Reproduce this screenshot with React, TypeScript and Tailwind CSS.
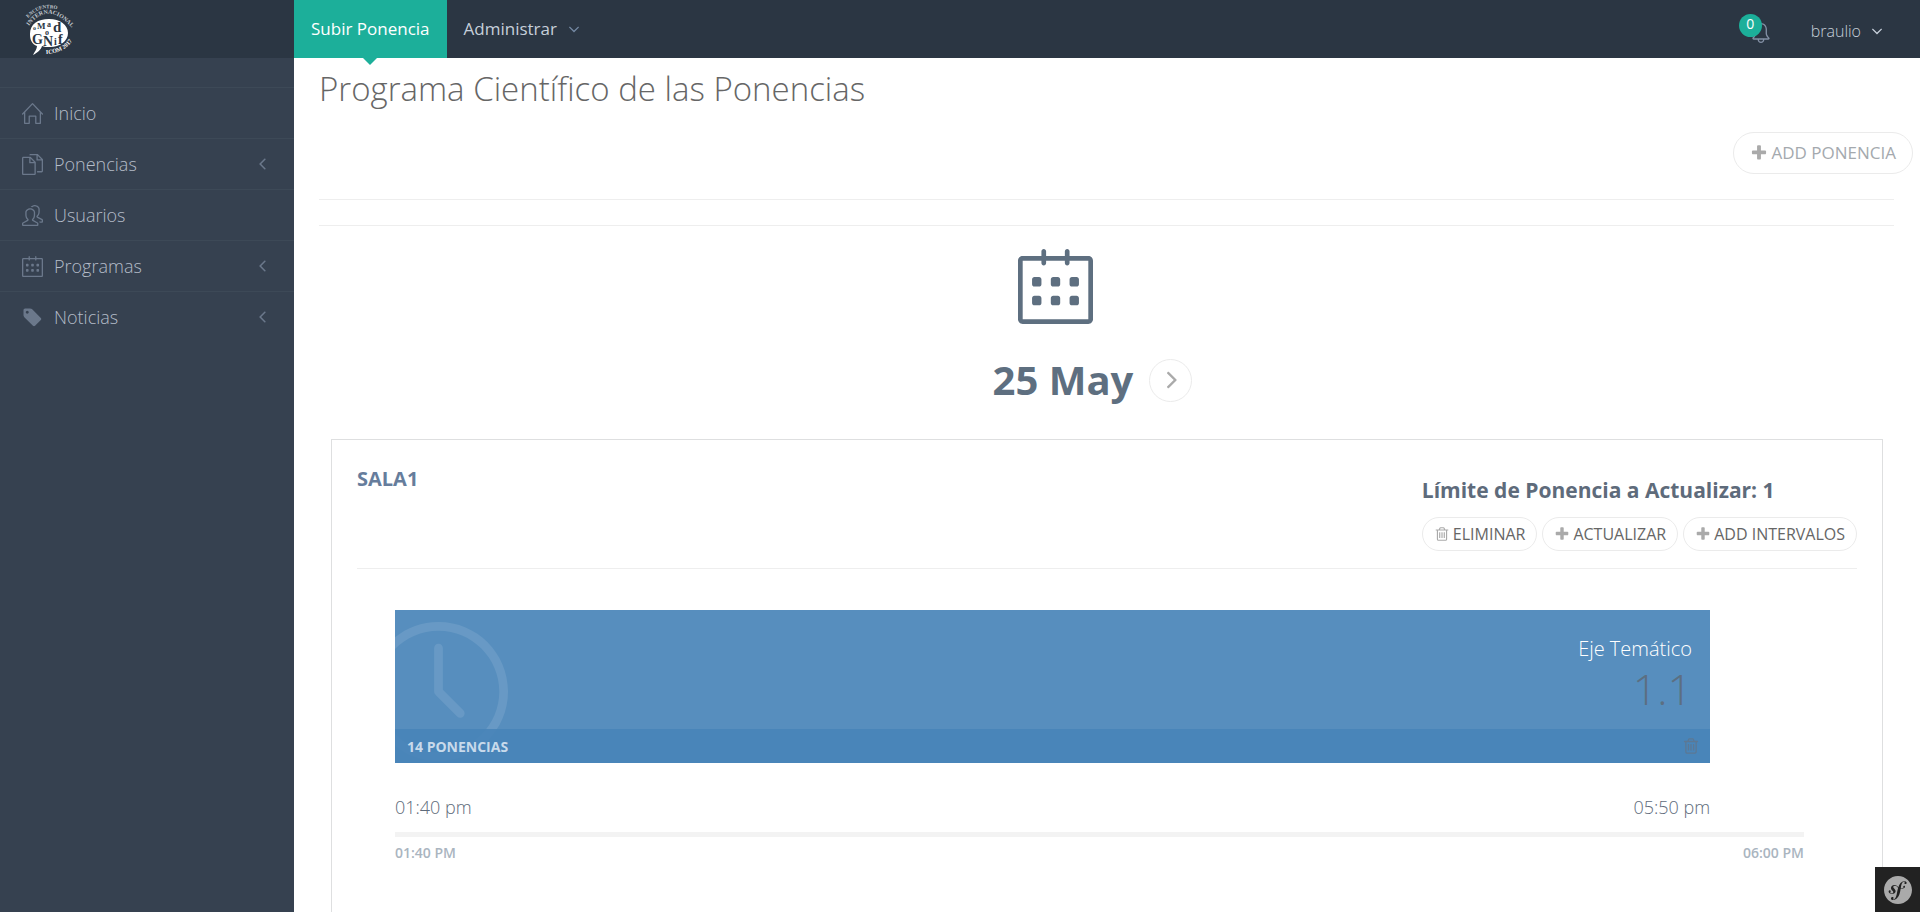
import type { ReactNode } from "react";
import { SlBell, SlCalender, SlClock, SlDocs, SlHome, SlPeople } from "react-icons/sl";
import { SiSymfony } from "react-icons/si";
import clsx from "clsx";

type IconProps = { className?: string };

const Glyph = ({ d, className }: IconProps & { d: string }) => (
  <svg viewBox="0 0 1792 1792" fill="currentColor" className={className} aria-hidden="true">
    <path d={d} />
  </svg>
);

const AngleIcon = ({ className }: IconProps) => (
  <Glyph
    className={className}
    d="M1395 736q0 13-10 23l-466 466q-10 10-23 10t-23-10l-466-466q-10-10-10-23t10-23l50-50q10-10 23-10t23 10l393 393 393-393q10-10 23-10t23 10l50 50q10 10 10 23z"
  />
);

const PlusIcon = ({ className }: IconProps) => (
  <Glyph
    className={className}
    d="M1600 736v192q0 40-28 68t-68 28h-416v416q0 40-28 68t-68 28h-192q-40 0-68-28t-28-68v-416h-416q-40 0-68-28t-28-68v-192q0-40 28-68t68-28h416v-416q0-40 28-68t68-28h192q40 0 68 28t28 68v416h416q40 0 68 28t28 68z"
  />
);

const TagIcon = ({ className }: IconProps) => (
  <Glyph
    className={className}
    d="M576 448q0-53-37.5-90.5t-90.5-37.5-90.5 37.5-37.5 90.5 37.5 90.5 90.5 37.5 90.5-37.5 37.5-90.5zm1067 576q0 53-37 90l-491 492q-39 37-91 37-53 0-90-37l-715-716q-38-37-64.5-101t-26.5-117v-416q0-52 38-90t90-38h416q53 0 117 26.5t102 64.5l715 714q37 39 37 91z"
  />
);

const TrashIcon = ({ className }: IconProps) => (
  <Glyph
    className={className}
    d="M704 736v576q0 14-9 23t-23 9h-64q-14 0-23-9t-9-23v-576q0-14 9-23t23-9h64q14 0 23 9t9 23zm256 0v576q0 14-9 23t-23 9h-64q-14 0-23-9t-9-23v-576q0-14 9-23t23-9h64q14 0 23 9t9 23zm256 0v576q0 14-9 23t-23 9h-64q-14 0-23-9t-9-23v-576q0-14 9-23t23-9h64q14 0 23 9t9 23zm128 724v-948h-896v948q0 22 7 40.5t14.5 27 10.5 8.5h832q3 0 10.5-8.5t14.5-27 7-40.5zm-672-1076h448l-48-117q-7-9-17-11h-317q-10 2-17 11zm928 32v64q0 14-9 23t-23 9h-96v948q0 83-47 143.5t-113 60.5h-832q-66 0-113-58.5t-47-141.5v-952h-96q-14 0-23-9t-9-23v-64q0-14 9-23t23-9h309l70-167q15-37 54-63t79-26h320q40 0 79 26t54 63l70 167h309q14 0 23 9t9 23z"
  />
);

const Logo = () => (
  <svg viewBox="0 0 52 52" className="size-[52px] overflow-visible" role="img" aria-label="Encuentro Internacional ICOM 2017">
    <defs>
      <path id="arc-top" d="M4 14 Q18 -1 38 7" />
      <path id="arc-mid" d="M5 22 Q23 -3 47 23" />
      <path id="arc-bottom" d="M22 50 Q46 49 52 28" />
    </defs>
    <path
      fill="#ffffff"
      d="M6 30C6 20 14 15 25 15c11 0 19 6 19 14 0 8-8 14-18 14-3 0-6 0-8-1-1 4-5 7-9 9 2-4 4-6 4-9-5-2-7-6-7-12z"
    />
    <g fontFamily="Liberation Serif, serif" fontWeight="700">
      <text fill="#c3cad1" fontSize="5">
        <textPath href="#arc-top">ENCUENTRO</textPath>
      </text>
      <text fill="#c3cad1" fontSize="6">
        <textPath href="#arc-mid">INTERNACIONAL</textPath>
      </text>
      <text fill="#ffffff" fontSize="6">
        <textPath href="#arc-bottom">ICOM 2017</textPath>
      </text>
      <text fill="#2b3643">
        <tspan x="9" y="26" fontSize="6">o</tspan>
        <tspan x="13" y="25" fontSize="9">M</tspan>
        <tspan x="23" y="23" fontSize="8">a</tspan>
        <tspan x="29" y="28" fontSize="15">d</tspan>
        <tspan x="21" y="31" fontSize="8">o</tspan>
        <tspan x="8" y="40" fontSize="14">G</tspan>
        <tspan x="19" y="42" fontSize="14">N</tspan>
        <tspan x="30" y="41" fontSize="10">i</tspan>
        <tspan x="34" y="40" fontSize="14">f</tspan>
      </text>
    </g>
  </svg>
);

const menu = [
  { label: "Inicio", icon: SlHome, expandable: false },
  { label: "Ponencias", icon: SlDocs, expandable: true },
  { label: "Usuarios", icon: SlPeople, expandable: false },
  { label: "Programas", icon: SlCalender, expandable: true },
  { label: "Noticias", icon: TagIcon, expandable: true },
];

const Header = () => (
  <header className="flex h-[58px] bg-[#2b3643]">
    <a href="#" className="w-[294px] shrink-0 pl-6 pt-1">
      <Logo />
    </a>

    <nav className="flex text-[17px]">
      <a href="#" className="relative flex items-center bg-[#1caf9a] px-[17px] text-white">
        Subir Ponencia
        <span className="absolute left-1/2 top-full -ml-[7px] border-x-[7px] border-t-[7px] border-x-transparent border-t-[#1caf9a]" />
      </a>
      <a href="#" className="flex items-center gap-2 px-[17px] text-[#c6cfda]">
        Administrar
        <AngleIcon className="size-[18px] text-[#7489a3]" />
      </a>
    </nav>

    <div className="ml-auto flex items-center pr-[34px]">
      <button type="button" aria-label="Notificaciones" className="relative mr-10 mt-[7px]">
        <SlBell className="size-5 text-[#8390a5]" />
        <span className="absolute -left-[12px] -top-[9px] flex size-[23px] items-center justify-center rounded-full bg-[#1caf9a] pb-0.5 text-[14px] leading-none text-white">
          0
        </span>
      </button>
      <button type="button" className="flex items-center gap-[7px] pt-1 text-[16px] font-light text-[#c6cfda]">
        braulio
        <AngleIcon className="size-[18px]" />
      </button>
    </div>
  </header>
);

const Sidebar = () => (
  <aside className="w-[294px] shrink-0 bg-[#364150] pt-[29px]">
    <ul>
      {menu.map(({ label, icon: Icon, expandable }) => (
        <li key={label} className="border-t border-[#3d4957]">
          <a href="#" className="flex h-[50px] items-center pl-[22px] pr-[21px] text-[18px] font-light text-[#b4bcc8]">
            <Icon className="mr-[11px] size-[21px] text-[#6b788b]" />
            {label}
            {expandable && <AngleIcon className="ml-auto size-5 rotate-90 text-[#6b788b]" />}
          </a>
        </li>
      ))}
    </ul>
  </aside>
);

const PillButton = ({ large, children }: { large?: boolean; children: ReactNode }) => (
  <button
    type="button"
    className={clsx(
      "flex items-center justify-center gap-[3px] whitespace-nowrap rounded-full border border-[#ebebeb] bg-white uppercase",
      large ? "h-[42px] px-4 text-[17px] text-[#a4a9ae]" : "h-[34px] px-[11px] text-[16px] text-[#666]"
    )}
  >
    {children}
  </button>
);

const Session = () => (
  <div className="pl-[38px] pr-[53px] pt-[41px]">
    <div className="w-14/15">

      {/* TILE */}

      <article className="relative overflow-hidden bg-[#578ebe]">
        <SlClock className="absolute -left-[26px] top-3 size-[139px] text-white/10" />
        <div className="flex flex-col items-end pr-[18px] pt-[25px]">
          <p className="text-[20px] leading-[28px] font-light text-white">Eje Temático</p>
          <p className="h-[66px] text-[43px] leading-[52px] font-light text-[#5c6f82]">1.1</p>
        </div>
        <footer className="relative flex h-[34px] items-center justify-between bg-[#4884b8]/90 pl-3 pr-[10px]">
          <span className="text-[14px] font-bold text-[#c8daeb]">14 PONENCIAS</span>
          <button type="button" aria-label="Eliminar eje">
            <TrashIcon className="size-[18px] text-[#5c7894]" />
          </button>
        </footer>
      </article>

      <div className="flex justify-between pt-[29px] text-[18px] leading-[30px] font-light text-[#5e6b7b]">
        <span>01:40 pm</span>
        <span>05:50 pm</span>
      </div>

    </div>

    {/* TIMELINE */}

    <div className="mt-[10px] h-[5px] bg-[#f3f3f3]" />
    <div className="flex justify-between pt-[6px] text-[14px] leading-[20px] font-semibold text-[#aab5bf]">
      <span>01:40 PM</span>
      <span>06:00 PM</span>
    </div>
  </div>
);

export default function App() {
  return (
    <div className="flex min-h-screen flex-col bg-white font-['Open_Sans',sans-serif] text-[#333]">
      <Header />

      <div className="flex flex-1">
        <Sidebar />

        <main className="flex min-w-0 flex-1 flex-col pl-[25px] pr-[26px]">
          <h1 className="pt-[6px] text-[33px] leading-[50px] font-light text-[#666]">
            Programa Científico de las Ponencias
          </h1>

          <div className="-mr-[19px] flex justify-end pt-[18px]">
            <PillButton large>
              <PlusIcon className="size-[18px] text-[#aaa]" />
              Add Ponencia
            </PillButton>
          </div>

          <hr className="mt-[25px] border-[#eee]" />
          <hr className="mt-[25px] border-[#eee]" />

          {/* DAY */}

          <div className="flex flex-col items-center pt-[23px] pr-7">
            <SlCalender className="mr-[74px] size-[75px] text-[#5e6f80]" />
            <div className="flex items-center gap-4 pt-[28px]">
              <h2 className="text-[40px] leading-[56px] font-bold text-[#5e6f80]">25 May</h2>
              <button
                type="button"
                aria-label="Día siguiente"
                className="flex size-[43px] items-center justify-center rounded-full border border-[#ebebeb]"
              >
                <AngleIcon className="size-[30px] -rotate-90 text-[#aaa]" />
              </button>
            </div>
          </div>

          {/* ROOM */}

          <section className="ml-3 mr-[11px] mt-[31px] flex-1 border border-b-0 border-[#dedfe0] px-[25px]">
            <div className="flex items-start justify-between border-b border-[#eee] pb-[17px]">
              <h3 className="pt-[25px] text-[20px] leading-[28px] font-bold text-[#667d9c]">SALA1</h3>
              <div className="pt-[35px]">
                <h4 className="text-[21px] leading-[30px] font-bold text-[#5e6b7b]">
                  Límite de Ponencia a Actualizar: 1
                </h4>
                <div className="flex gap-[5px] pt-3">
                  <PillButton>
                    <TrashIcon className="size-4 text-[#aaa]" />
                    Eliminar
                  </PillButton>
                  <PillButton>
                    <PlusIcon className="size-4 text-[#aaa]" />
                    Actualizar
                  </PillButton>
                  <PillButton>
                    <PlusIcon className="size-4 text-[#aaa]" />
                    Add Intervalos
                  </PillButton>
                </div>
              </div>
            </div>

            <Session />
          </section>
        </main>
      </div>

      <a
        href="#"
        aria-label="Symfony"
        className="fixed bottom-0 right-0 flex size-[45px] items-center justify-center bg-[#222]"
      >
        <SiSymfony className="size-7 text-[#aaa]" />
      </a>
    </div>
  );
}
